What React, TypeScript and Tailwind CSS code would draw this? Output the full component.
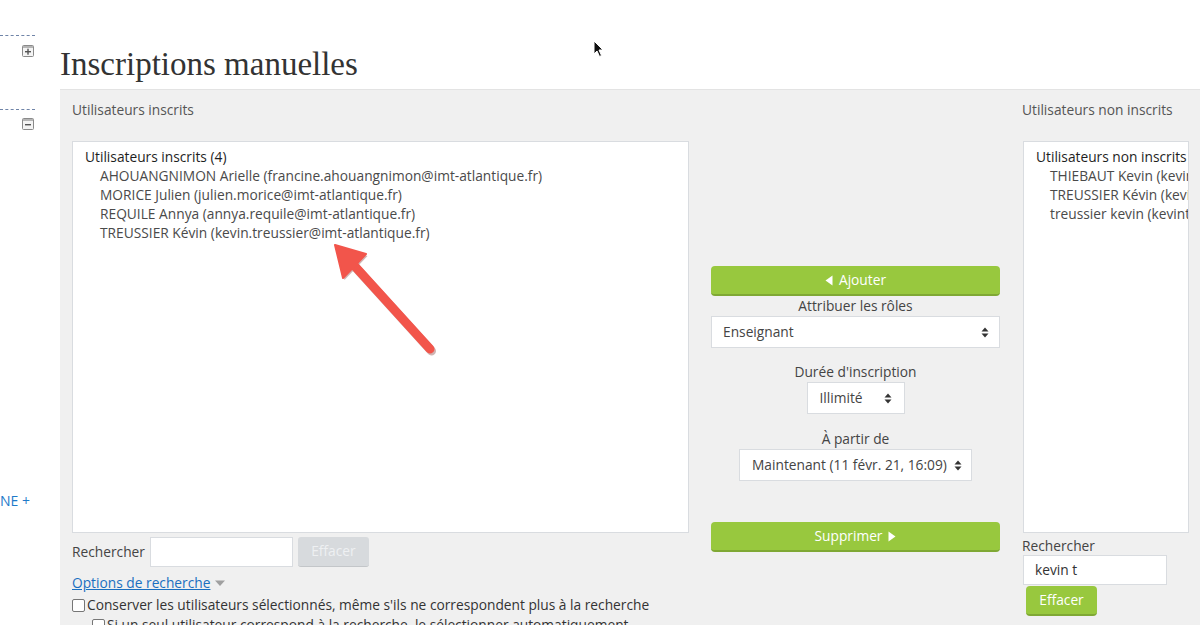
import React from "react";

const Updown = () => (
  <svg width="8" height="11" viewBox="0 0 8 11" className="shrink-0">
    <path d="M0.5 4.5 L4 0.5 L7.5 4.5 Z" fill="#333" />
    <path d="M0.5 6.5 L4 10.5 L7.5 6.5 Z" fill="#333" />
  </svg>
);

const BoxIcon = ({ plus }: { plus: boolean }) => (
  <svg width="12" height="12" viewBox="0 0 12 12">
    <rect x="0.5" y="0.5" width="11" height="11" rx="1" fill="#f4f4f4" stroke="#8a8a8a" />
    <rect x="1" y="1" width="10" height="2" fill="#b5b5b5" />
    <rect x="3" y="6" width="6" height="1.4" fill="#555" />
    {plus && <rect x="5.3" y="3.7" width="1.4" height="6" fill="#555" />}
  </svg>
);

const Checkbox = () => (
  <span className="inline-block w-[13px] h-[13px] rounded-[2px] border border-[#767676] bg-white shrink-0" />
);

export default function App() {
  return (
    <div
      className="relative w-[1200px] h-[625px] overflow-hidden bg-white flex text-[13.75px] text-[#373a3c]"
      style={{ fontFamily: '"Open Sans", "Noto Sans", sans-serif' }}
    >
      {/* sidebar */}
      <div className="w-[60px] shrink-0 flex flex-col">
        <div className="mt-[35px] w-[35px] border-t border-dashed border-[#6f84a8]" />
        <div className="ml-[22px] mt-[9px] h-[12px] flex">
          <BoxIcon plus={true} />
        </div>
        <div className="mt-[52px] w-[35px] border-t border-dashed border-[#6f84a8]" />
        <div className="ml-[22px] mt-[8px] h-[12px] flex">
          <BoxIcon plus={false} />
        </div>
        <div className="mt-[361px] text-[14px] leading-[20px] text-[#1f7ac9]">NE +</div>
      </div>

      {/* main */}
      <div className="flex-1 flex flex-col min-w-0">
        <div className="h-[89px] pt-[45px] shrink-0">
          <h1
            className="text-[33px] leading-[38px] text-[#333] whitespace-nowrap"
            style={{ fontFamily: '"Liberation Serif", serif' }}
          >
            Inscriptions manuelles
          </h1>
        </div>

        <div className="flex-1 bg-[#f0f0f0] border-t border-[#e3e3e3] pl-[12px] pt-[10px] flex gap-[22px]">
          {/* left column */}
          <div className="w-[617px] shrink-0 flex flex-col">
            <div className="h-[20px] leading-[20px] text-[#555]">Utilisateurs inscrits</div>
            <div className="mt-[21px] h-[392px] bg-white border border-[#d9dce0] pt-[5px] pl-[12px] leading-[19px] text-[#4a4a4a]">
              <div className="text-[#1e1e1e]">Utilisateurs inscrits (4)</div>
              <div className="pl-[15px]">
                <div>AHOUANGNIMON Arielle (francine.ahouangnimon@imt-atlantique.fr)</div>
                <div>MORICE Julien (julien.morice@imt-atlantique.fr)</div>
                <div>REQUILE Annya (annya.requile@imt-atlantique.fr)</div>
                <div>TREUSSIER Kévin (kevin.treussier@imt-atlantique.fr)</div>
              </div>
            </div>
            <div className="mt-[4px] flex items-center h-[30px]">
              <span className="text-[#444] mr-[5px]">Rechercher</span>
              <div className="w-[143px] h-[30px] bg-white border border-[#d9dce0]" />
              <div className="ml-[5px] w-[71px] h-[30px] rounded-[3px] bg-[#d7dadd] border-b border-[#c3c6c9] text-[#eef0f2] flex items-center justify-center">
                Effacer
              </div>
            </div>
            <div className="mt-[6px] h-[20px] leading-[20px] flex items-center">
              <span className="text-[#1a6fc0] underline">Options de recherche</span>
              <svg width="12" height="8" viewBox="0 0 12 8" className="ml-[4px]">
                <path d="M1 1.5 L11 1.5 L6 7 Z" fill="#a0a0a0" />
              </svg>
            </div>
            <div className="mt-[2px] h-[20px] flex items-center gap-[2px] text-[#333]">
              <Checkbox />
              <span>Conserver les utilisateurs sélectionnés, même s'ils ne correspondent plus à la recherche</span>
            </div>
            <div className="h-[20px] pl-[20px] flex items-center gap-[2px] text-[#333] whitespace-nowrap">
              <Checkbox />
              <span>Si un seul utilisateur correspond à la recherche, le sélectionner automatiquement</span>
            </div>
          </div>

          {/* middle column */}
          <div className="w-[289px] shrink-0 flex flex-col items-center pt-[166px]">
            <div className="w-full h-[30px] rounded-[4px] bg-[#98c83e] border-b-2 border-[#7fa834] text-white flex items-center justify-center gap-[6px]">
              <svg width="8" height="11" viewBox="0 0 8 11">
                <path d="M7.5 0.5 L0.5 5.5 L7.5 10.5 Z" fill="#fff" />
              </svg>
              <span>Ajouter</span>
            </div>
            <div className="h-[20px] leading-[20px] text-[#444]">Attribuer les rôles</div>
            <div className="w-full h-[32px] bg-white border border-[#d9dce0] flex items-center justify-between pl-[11px] pr-[10px] text-[#444]">
              <span>Enseignant</span>
              <Updown />
            </div>
            <div className="mt-[14px] h-[20px] leading-[20px] text-[#444]">Durée d'inscription</div>
            <div className="w-[98px] h-[32px] bg-white border border-[#d9dce0] flex items-center justify-between pl-[12px] pr-[12px] text-[#444]">
              <span>Illimité</span>
              <Updown />
            </div>
            <div className="mt-[15px] h-[20px] leading-[20px] text-[#444]">À partir de</div>
            <div className="w-[233px] h-[32px] bg-white border border-[#d9dce0] flex items-center justify-between pl-[12px] pr-[9px] text-[#444] whitespace-nowrap">
              <span>Maintenant (11 févr. 21, 16:09)</span>
              <Updown />
            </div>
            <div className="mt-[41px] w-full h-[30px] rounded-[4px] bg-[#98c83e] border-b-2 border-[#7fa834] text-white flex items-center justify-center gap-[6px]">
              <span>Supprimer</span>
              <svg width="8" height="11" viewBox="0 0 8 11">
                <path d="M0.5 0.5 L7.5 5.5 L0.5 10.5 Z" fill="#fff" />
              </svg>
            </div>
          </div>

          {/* right column */}
          <div className="w-[167px] shrink-0 flex flex-col">
            <div className="h-[20px] leading-[20px] text-[#555] whitespace-nowrap">Utilisateurs non inscrits</div>
            <div className="mt-[21px] ml-[1px] h-[392px] bg-white border border-[#d9dce0] pt-[5px] pl-[12px] leading-[19px] text-[#4a4a4a] overflow-hidden whitespace-nowrap">
              <div className="text-[#1e1e1e]">Utilisateurs non inscrits (3)</div>
              <div className="pl-[14px]">
                <div>THIEBAUT Kevin (kevin.thiebaut@imt-atlantique.fr)</div>
                <div>TREUSSIER Kévin (kevin.treussier@gmail.com)</div>
                <div>treussier kevin (kevintreussier@gmail.com)</div>
              </div>
            </div>
            <div className="mt-[4px] h-[18px] leading-[18px] text-[#444]">Rechercher</div>
            <div className="ml-[1px] w-[144px] h-[30px] bg-white border border-[#d9dce0] flex items-center pl-[11px] text-[#333]">
              kevin t
            </div>
            <div className="ml-[4px] mt-[1px] w-[71px] h-[30px] rounded-[4px] bg-[#98c83e] border-b-2 border-[#7fa834] text-white flex items-center justify-center">
              Effacer
            </div>
          </div>
        </div>
      </div>

      {/* annotation arrow */}
      <svg className="absolute left-0 top-0 pointer-events-none" width="1200" height="625" viewBox="0 0 1200 625">
        <g opacity="0.35" transform="translate(1.5,2)">
          <line x1="351" y1="262" x2="430" y2="349" stroke="#7a2a26" strokeWidth="9" strokeLinecap="round" />
          <path d="M335 245 L366 254 L343 278 Z" fill="#7a2a26" />
        </g>
        <line x1="351" y1="262" x2="430" y2="349" stroke="#f2554b" strokeWidth="9" strokeLinecap="round" />
        <path d="M335 245 L366 254 L343 278 Z" fill="#f2554b" stroke="#f2554b" strokeWidth="2" strokeLinejoin="round" />
      </svg>

      {/* mouse cursor */}
      <svg className="absolute left-[593px] top-[40px] pointer-events-none" width="12" height="18" viewBox="0 0 12 18">
        <path d="M1 1 L1 14 L4 11 L6.5 16.5 L8.5 15.5 L6 10 L10 10 Z" fill="#111" stroke="#fff" strokeWidth="1" strokeLinejoin="round" />
      </svg>
    </div>
  );
}
